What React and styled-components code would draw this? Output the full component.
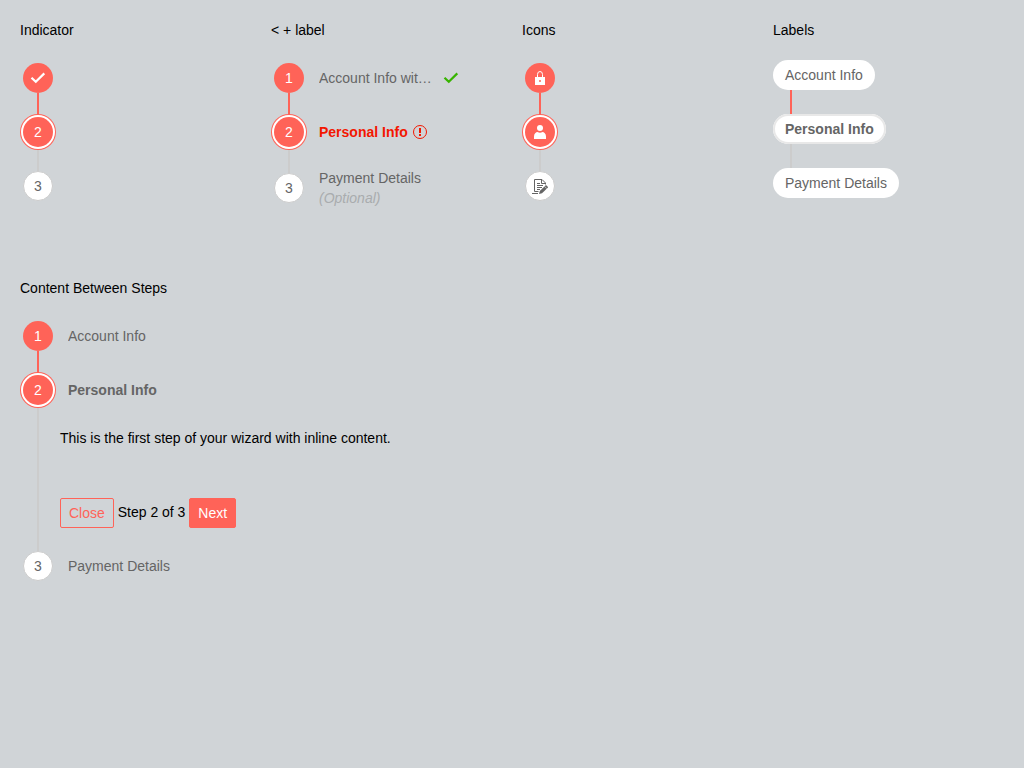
import React from "react";
import styled, { createGlobalStyle, css } from "styled-components";

const coral = "#ff6358";
const grey = "#656565";
const rail = "#cccccc";

const GlobalStyle = createGlobalStyle`
  *, *::before, *::after { box-sizing: border-box; }
  body {
    margin: 0;
    background: #d0d4d7;
    color: #000;
    font: 14px/20px "Liberation Sans", Arial, sans-serif;
  }
`;

const Page = styled.main`
  display: flex;
  flex-direction: column;
  gap: 70px;
  padding: 20px 0 20px 20px;
`;

const Columns = styled.div`
  display: grid;
  grid-template-columns: repeat(4, minmax(0, 1fr));
`;

const Section = styled.section`
  display: flex;
  flex-direction: column;
  align-items: flex-start;
  gap: 20px;
`;

const Heading = styled.h2`
  margin: 0;
  font-size: 14px;
  font-weight: 400;
`;

const StepList = styled.ol`
  list-style: none;
  margin: 0;
  padding: 0;
`;

const Step = styled.li`
  display: grid;
  grid-template-columns: 36px auto;
  justify-content: start;
`;

const StepLink = styled.a`
  grid-column: 1 / -1;
  display: flex;
  min-height: 36px;
  color: ${grey};
  text-decoration: none;
`;

const Rail = styled.span`
  display: flex;
  flex-direction: column;
  align-items: center;
  width: 36px;
`;

const RailLine = styled.span`
  flex: 1;
  width: 2px;
  background: ${(p) => (p.$kind === "done" ? coral : p.$kind === "todo" ? rail : "transparent")};
`;

const Connector = styled.span`
  justify-self: center;
  width: 2px;
  min-height: ${(p) => (p.$tall ? "24px" : "18px")};
  background: ${(p) => (p.$kind === "done" ? coral : rail)};
`;

const indicatorStates = {
  done: css`
    background: ${coral};
    color: #fff;
  `,
  current: css`
    background: ${coral};
    color: #fff;
    box-shadow: 0 0 0 2px #fff, 0 0 0 3px ${coral};
  `,
  todo: css`
    background: #fff;
    color: ${grey};
    border: 1px solid ${rail};
  `,
};

const Indicator = styled.span`
  display: flex;
  align-items: center;
  justify-content: center;
  position: relative;
  width: 30px;
  height: 30px;
  border-radius: 50%;
  ${(p) => indicatorStates[p.$state]}
`;

const Label = styled.span`
  align-self: center;
  padding-left: 12px;
`;

const LabelRow = styled.span`
  display: flex;
  align-items: center;
  gap: 4px;
  color: ${(p) => (p.$invalid ? "#f31700" : grey)};
  font-weight: ${(p) => (p.$current ? 700 : 400)};
`;

const LabelText = styled.span`
  max-width: 120px;
  overflow: hidden;
  text-overflow: ellipsis;
  white-space: nowrap;
`;

const Optional = styled.span`
  display: block;
  color: #a9acae;
  font-style: italic;
`;

const Pill = styled.a`
  grid-column: 1 / -1;
  justify-self: start;
  height: 30px;
  padding: 0 12px;
  border-radius: 15px;
  background: #fff;
  color: ${grey};
  line-height: 30px;
  text-decoration: none;
  ${(p) => p.$current && css`
    font-weight: 700;
    box-shadow: inset 0 0 0 2px #e8e8e8;
  `}
`;

const Content = styled.div`
  display: flex;
  flex-direction: column;
  gap: 50px;
  padding: 20px 0 20px 4px;
`;

const Paragraph = styled.p`
  margin: 0;
`;

const Actions = styled.div`
  height: 30px;
`;

const Button = styled.button`
  height: 30px;
  padding: 0 8px;
  border: 1px solid ${coral};
  border-radius: 2px;
  background: ${(p) => (p.$primary ? coral : "transparent")};
  color: ${(p) => (p.$primary ? "#fff" : coral)};
  font: inherit;
  vertical-align: middle;
  cursor: pointer;
`;

const Glyph = styled.svg`
  display: block;
  flex: none;
  width: 16px;
  height: 16px;
  color: ${(p) => p.$tone || "inherit"};
`;

const CheckIcon = ({ tone }) => (
  <Glyph $tone={tone} viewBox="0 0 16 16" aria-hidden="true">
    <path d="M1.500 7.700L5.800 11.800L14.300 3.400" fill="none" stroke="currentColor" strokeWidth="2.2" />
  </Glyph>
);

const ErrorIcon = () => (
  <Glyph viewBox="0 0 16 16" aria-hidden="true">
    <circle cx="8" cy="8" r="6.5" fill="none" stroke="currentColor" />
    <path d="M7 4h2v5H7zM7 10h2v2H7z" fill="currentColor" />
  </Glyph>
);

const LockIcon = () => (
  <Glyph viewBox="0 0 16 16" aria-hidden="true">
    <path d="M5.5 7.5V4.5a2.5 3 0 0 1 5 0V7.5" fill="none" stroke="currentColor" />
    <path fillRule="evenodd" fill="currentColor" d="M3 7h10v8H3zM8 10a1 1 0 1 0 0 2a1 1 0 0 0 0-2z" />
  </Glyph>
);

const UserIcon = () => (
  <Glyph viewBox="0 0 16 16" aria-hidden="true">
    <circle cx="8" cy="4" r="3" fill="currentColor" />
    <path d="M2 15v-2.5C2 9.500 4 8 5.500 8Q8 9.500 10.500 8C12 8 14 9.500 14 12.500V15z" fill="currentColor" />
  </Glyph>
);

const DocumentEditIcon = () => (
  <Glyph viewBox="0 0 16 16" aria-hidden="true">
    <g fill="none" stroke="currentColor">
      <path d="M6.500 13.500H2.500V1.500H10L13.500 5V6.500" />
      <path d="M9.500 1.500V5.500H13.500" />
      <path d="M5 5.500H8M5 7.500H11M5 9.500H10M5 11.500H8M0 15.500H6" />
    </g>
    <path
      d="M14 7L16.200 9.200L10 15.200L7 16L7.800 13z"
      fill="currentColor"
      stroke="#fff"
      strokeWidth="0.8"
      paintOrder="stroke"
    />
    <path d="M12.500 8.300L14.800 10.600" fill="none" stroke="#fff" strokeWidth="0.6" />
  </Glyph>
);

const icons = {
  check: <CheckIcon />,
  lock: <LockIcon />,
  user: <UserIcon />,
  document: <DocumentEditIcon />,
};

const toneOf = (state) => (state === "done" ? "done" : "todo");

function Stepper({ steps }) {
  return (
    <StepList>
      {steps.map((step, i) => {
        const last = i === steps.length - 1;
        const before = i === 0 ? "none" : toneOf(steps[i - 1].state);
        const after = last ? "none" : toneOf(step.state);
        return (
          <Step key={i}>
            <StepLink
              href="#"
              aria-current={step.state === "current" ? "step" : undefined}
              aria-label={step.label ? undefined : `Step ${i + 1}`}
            >
              <Rail>
                <RailLine $kind={before} />
                <Indicator $state={step.state}>{step.icon ? icons[step.icon] : i + 1}</Indicator>
                <RailLine $kind={after} />
              </Rail>
              {step.label && (
                <Label>
                  <LabelRow $current={step.state === "current"} $invalid={step.invalid}>
                    <LabelText>{step.label}</LabelText>
                    {step.valid && <CheckIcon tone="#37b400" />}
                    {step.invalid && <ErrorIcon />}
                  </LabelRow>
                  {step.optional && <Optional>(Optional)</Optional>}
                </Label>
              )}
            </StepLink>
            {!last && <Connector $kind={after} />}
            {step.content}
          </Step>
        );
      })}
    </StepList>
  );
}

function LabelStepper({ steps }) {
  return (
    <StepList>
      {steps.map((step, i) => (
        <Step key={step.label}>
          <Pill href="#" $current={step.state === "current"}>{step.label}</Pill>
          {i < steps.length - 1 && <Connector $tall $kind={toneOf(step.state)} />}
        </Step>
      ))}
    </StepList>
  );
}

const indicatorSteps = [
  { state: "done", icon: "check" },
  { state: "current" },
  { state: "todo" },
];

const labelledSteps = [
  { state: "done", label: "Account Info with long text", valid: true },
  { state: "current", label: "Personal Info", invalid: true },
  { state: "todo", label: "Payment Details", optional: true },
];

const iconSteps = [
  { state: "done", icon: "lock" },
  { state: "current", icon: "user" },
  { state: "todo", icon: "document" },
];

const plainSteps = [
  { state: "done", label: "Account Info" },
  { state: "current", label: "Personal Info" },
  { state: "todo", label: "Payment Details" },
];

const inlineContent = (
  <Content>
    <Paragraph>This is the first step of your wizard with inline content.</Paragraph>
    <Actions>
      <Button type="button">Close</Button>
      {" "}Step 2 of 3{" "}
      <Button type="button" $primary>Next</Button>
    </Actions>
  </Content>
);

const contentSteps = plainSteps.map((step) =>
  step.state === "current" ? { ...step, content: inlineContent } : step
);

export default function App() {
  return (
    <>
      <GlobalStyle />
      <Page>
        <Columns>
          <Section>
            <Heading>Indicator</Heading>
            <Stepper steps={indicatorSteps} />
          </Section>
          <Section>
            <Heading>&lt; + label</Heading>
            <Stepper steps={labelledSteps} />
          </Section>
          <Section>
            <Heading>Icons</Heading>
            <Stepper steps={iconSteps} />
          </Section>
          <Section>
            <Heading>Labels</Heading>
            <LabelStepper steps={plainSteps} />
          </Section>
        </Columns>
        <Section>
          <Heading>Content Between Steps</Heading>
          <Stepper steps={contentSteps} />
        </Section>
      </Page>
    </>
  );
}
